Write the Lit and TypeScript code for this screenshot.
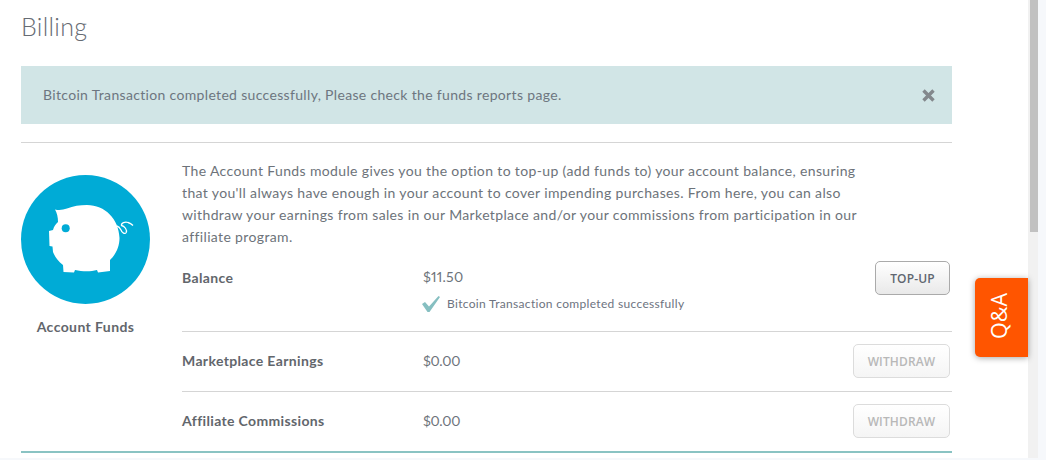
import { LitElement, html, css } from "lit";
import { customElement } from "lit/decorators.js";

@customElement("app-root")
export class AppRoot extends LitElement {
  static styles = css`
    :host {
      display: block;
      width: 1046px;
      height: 460px;
      overflow: hidden;
      position: relative;
      background: #f6f8fb;
      font-family: Lato, "Open Sans", sans-serif;
      font-variant-numeric: proportional-nums;
      color: #666;
    }
    .frame { display: flex; height: 458px; }
    .page { width: 1028px; background: #fff; padding: 0 0 0 21px; box-sizing: border-box; }
    .inner { width: 931px; }
    .track { width: 10px; background: #f1f1f1; display: flex; justify-content: flex-end; }
    .thumb { width: 8px; height: 232px; background: #c1c1c1; }
    h1 { margin: 0; padding-top: 11px; height: 66px; box-sizing: border-box; font-size: 25px; line-height: 30px; font-weight: 300; color: #666b73; letter-spacing: 0.3px; }
    .alert { height: 58px; background: #d1e5e6; display: flex; align-items: center; justify-content: space-between; padding: 0 17px 0 22px; font-size: 14px; color: #6d7680; letter-spacing: 0.33px; }
    .alert span { position: relative; top: -1px; }
    .close { display: block; }
    .main { margin-top: 18px; border-top: 1px solid #d5d5d5; display: flex; height: 311px; border-bottom: 2px solid #8ac3c3; box-sizing: border-box; }
    .left { width: 161px; flex: none; display: flex; flex-direction: column; align-items: flex-start; padding-top: 32px; }
    .circle { width: 129px; height: 129px; display: block; }
    .cap { width: 129px; text-align: center; margin-top: 14px; font-size: 14px; font-weight: 700; line-height: 18px; color: #62666c; letter-spacing: 0.4px; white-space: nowrap; }
    .right { flex: 1; min-width: 0; }
    .desc { margin: 0; padding-top: 17px; font-size: 14px; line-height: 22px; height: 117px; box-sizing: border-box; color: #6d737a; letter-spacing: 0.36px; width: 685px; }
    .row { display: grid; grid-template-columns: 241px 1fr auto; padding: 0 2px 1px 0; border-bottom: 1px solid #d5d5d5; height: 60px; box-sizing: border-box; align-items: center; }
    .row.first { height: 72px; align-items: start; padding-top: 1px; }
    .row.last { border-bottom: 0; height: 59px; }
    .label { font-size: 14px; font-weight: 700; color: #62666c; letter-spacing: 0.35px; margin-bottom: 2px; }
    .first .label { padding-top: 8px; margin-bottom: 0; }
    .amount { font-size: 14px; color: #6d737a; letter-spacing: -0.3px; margin-bottom: 2px; }
    .first .amount { padding-top: 7px; line-height: 17px; letter-spacing: 0.2px; margin-bottom: 0; }
    .note { display: flex; align-items: center; gap: 7px; margin: 11px 0 0 -1px; font-size: 12px; color: #6d7380; letter-spacing: 0.32px; line-height: 16px; }
    .btn { font-family: "Open Sans", sans-serif; font-size: 12px; font-weight: 600; height: 34px; box-sizing: border-box; border-radius: 5px; display: flex; align-items: center; justify-content: center; letter-spacing: 0.15px; }
    .top { width: 75px; color: #5f6670; border: 1px solid #aaa; background: linear-gradient(#fff, #e9e9e9); }
    .wd { width: 97px; color: #b8b8b8; border: 1px solid #dcdcdc; background: linear-gradient(#fff, #f5f5f5); }
    .qa { position: absolute; left: 975px; top: 278px; width: 53px; height: 79px; box-sizing: border-box; padding: 0 5px 3px 0; background: #ff5500; border-radius: 5px 0 0 5px; box-shadow: 0 1px 6px rgba(0,0,0,.35); color: #fff; display: flex; align-items: center; justify-content: center; }
    .qa span { writing-mode: vertical-rl; transform: rotate(180deg); font-family: "Open Sans", sans-serif; font-size: 21.5px; line-height: 1; }
  `;

  render() {
    return html`
      <div class="frame">
        <div class="page">
          <div class="inner">
            <h1>Billing</h1>
            <div class="alert">
              <span>Bitcoin Transaction completed successfully, Please check the funds reports page.</span>
              <svg class="close" width="13" height="13" viewBox="0 0 13 13"><path d="M1.5 1.5 11.5 11.5M11.5 1.5 1.5 11.5" stroke="#83888c" stroke-width="3.4"/></svg>
            </div>
            <div class="main">
              <div class="left">
                <svg class="circle" viewBox="0 0 129 129">
                  <circle cx="64.5" cy="64.5" r="64.5" fill="#00abd6"/>
                  <path fill="#fff" d="M34 34.5 C38 35.5 42 35 46 33.5 C52 31 59 30 66 30 C84 30 98 44 98.5 63 C98.5 72 94.5 80 89 85 L89 96 L77 97.5 L76 95 C69 97 61 96.5 54 95 L53 97.5 L42.5 97 L42 90 C37 86 34 82 32 77 L31.5 71.5 L28.5 71 L28 56 L32 55 C33 51 35 49 37 47 C37 42 36 38 34 34.5Z"/>
                  <circle cx="44.7" cy="53.3" r="4" fill="#00abd6"/>
                  <path fill="none" stroke="#fff" stroke-width="1.3" d="M96 51 C98 51.5 99 53 100 55 C101 58 104 59.5 105.2 57.5 C106.5 55 103.5 51 100.5 50.5 C100 48 104 46.5 107 47.5 C109 48 111 49.5 112 50.5"/>
                </svg>
                <div class="cap">Account Funds</div>
              </div>
              <div class="right">
                <p class="desc">The Account Funds module gives you the option to top-up (add funds to) your account balance, ensuring that you'll always have enough in your account to cover impending purchases. From here, you can also withdraw your earnings from sales in our Marketplace and/or your commissions from participation in our affiliate program.</p>
                <div class="row first">
                  <div class="label">Balance</div>
                  <div>
                    <div class="amount">$11.50</div>
                    <div class="note">
                      <svg width="18" height="16" viewBox="0 0 18 16"><path fill="#86bfc1" d="M0 8 3 6 7 10.5 16.5 0 18 1 7.5 16 5.5 16Z"/></svg>
                      <span>Bitcoin Transaction completed successfully</span>
                    </div>
                  </div>
                  <div class="btn top">TOP-UP</div>
                </div>
                <div class="row">
                  <div class="label">Marketplace Earnings</div>
                  <div class="amount">$0.00</div>
                  <div class="btn wd">WITHDRAW</div>
                </div>
                <div class="row last">
                  <div class="label">Affiliate Commissions</div>
                  <div class="amount">$0.00</div>
                  <div class="btn wd">WITHDRAW</div>
                </div>
              </div>
            </div>
          </div>
        </div>
        <div class="track"><div class="thumb"></div></div>
      </div>
      <div class="qa"><span>Q&amp;A</span></div>
    `;
  }
}
